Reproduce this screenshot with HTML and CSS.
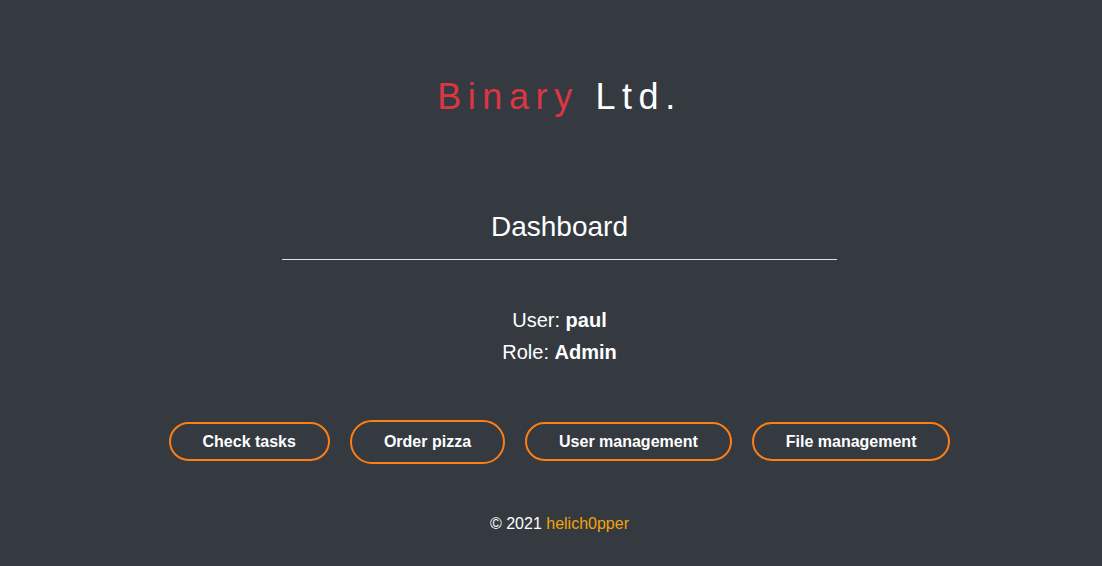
FILE: index.html
```html
<!DOCTYPE html>
<html lang="en">
<head>
<meta charset="utf-8">
<title>Binary Ltd. - Dashboard</title>
<link rel="stylesheet" href="styles.css">
</head>
<body>
<div class="page">
  <header class="brand">
    <h1 class="logo"><span class="logo-red">Binary</span> Ltd.</h1>
  </header>
  <main class="panel">
    <h2 class="panel-title">Dashboard</h2>
    <hr class="rule">
    <div class="info">
      <p class="info-row">User: <b>paul</b></p>
      <p class="info-row">Role: <b>Admin</b></p>
    </div>
    <nav class="actions">
      <a class="btn" href="#">Check tasks</a>
      <a class="btn btn-active" href="#">Order pizza</a>
      <a class="btn" href="#">User management</a>
      <a class="btn" href="#">File management</a>
    </nav>
  </main>
  <footer class="footer">© 2021 <span class="author">helich0pper</span></footer>
</div>
</body>
</html>
```

FILE: styles.css
```css
html, body {
  margin: 0;
  padding: 0;
  background: #343a40;
}
body {
  font-family: "Liberation Sans", Arial, sans-serif;
  color: #ffffff;
  height: 566px;
  overflow: hidden;
}
.page {
  padding-left: 17px;
  display: flex;
  flex-direction: column;
  align-items: center;
}
.brand {
  padding-top: 73px;
}
.logo {
  margin: 0;
  font-weight: normal;
  font-size: 36px;
  line-height: 48px;
  letter-spacing: 6.6px;
  color: #ffffff;
}
.logo-red {
  color: #dc3545;
}
.panel {
  margin-top: 89px;
  display: flex;
  flex-direction: column;
  align-items: center;
}
.panel-title {
  margin: 0;
  font-weight: normal;
  font-size: 28px;
  line-height: 34px;
}
.rule {
  width: 555px;
  margin: 15px 0 0;
  border: 0;
  border-top: 1px solid #dee2e6;
  height: 0;
}
.info {
  margin-top: 44px;
  display: flex;
  flex-direction: column;
  align-items: center;
}
.info-row {
  margin: 0;
  font-size: 20px;
  line-height: 32px;
}
.actions {
  margin-top: 52px;
  display: flex;
  align-items: flex-start;
  gap: 20px;
}
.btn {
  display: block;
  margin-top: 2px;
  padding: 8px 32px;
  line-height: 19px;
  font-size: 16px;
  font-weight: bold;
  color: #ffffff;
  text-decoration: none;
  border: 2px solid #fd7e14;
  border-radius: 30px;
}
.btn-active {
  margin-top: 0;
  padding: 10px 32px 11px;
}
.footer {
  margin-top: 50px;
  font-size: 16px;
  line-height: 20px;
}
.author {
  color: #f0a30a;
}
```
